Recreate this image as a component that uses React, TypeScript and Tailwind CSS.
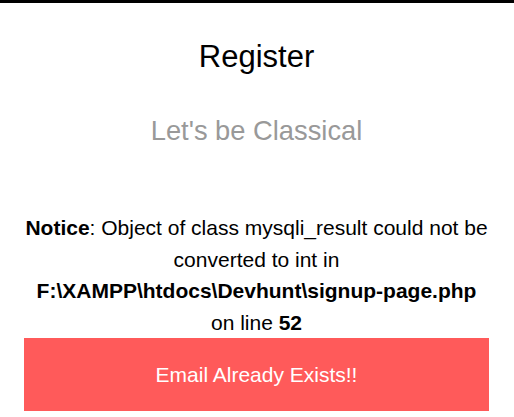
export default function App() {
  return (
    <div className="min-h-[417px] border-t-[3px] border-black bg-white font-['Liberation_Sans',Arial,sans-serif]">
      <div className="pl-6 pr-[25px] text-center">
        <h1 className="pt-[36px] text-[31px] leading-[36px] text-black">Register</h1>
        <p className="mt-[40px] text-[27.3px] leading-[32px] text-[#999999]">Let&apos;s be Classical</p>
        <p className="mt-[65px] text-[21px] leading-[31.5px] text-black">
          <b>Notice</b>: Object of class mysqli_result could not be converted to int in{" "}
          <b className="whitespace-nowrap">F:\XAMPP\htdocs\Devhunt\signup-page.php</b> on line <b>52</b>
        </p>
        <div className="flex h-[73px] items-center justify-center bg-[#ff5a5a] text-[21px] text-white">
          Email Already Exists!!
        </div>
      </div>
    </div>
  );
}
